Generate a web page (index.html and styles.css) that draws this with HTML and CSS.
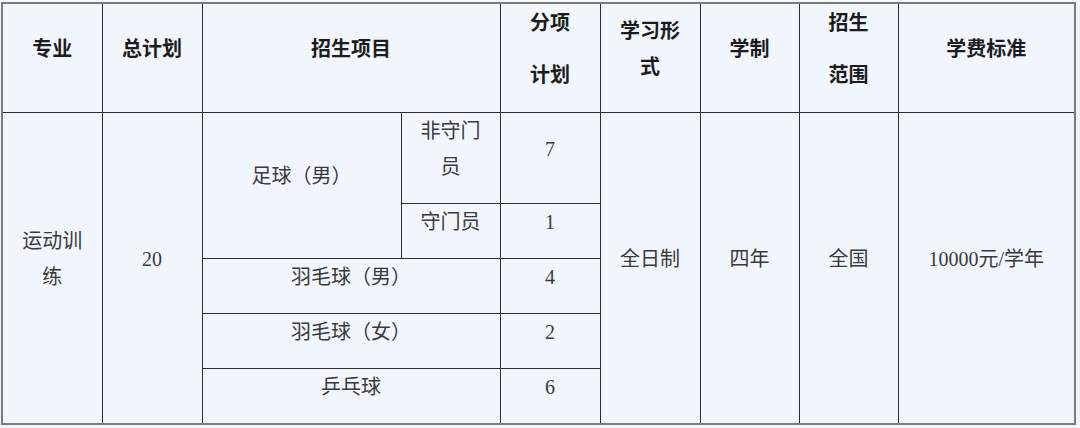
FILE: index.html
```html
<!DOCTYPE html>
<html lang="zh-CN">
<head>
<meta charset="utf-8">
<title>招生计划</title>
<link rel="stylesheet" href="styles.css">
</head>
<body>
<table class="plan">
  <colgroup>
    <col class="c1"><col class="c2"><col class="c3"><col class="c4"><col class="c5"><col class="c6"><col class="c7"><col class="c8"><col class="c9">
  </colgroup>
  <thead>
    <tr class="head">
      <th>专业</th>
      <th>总计划</th>
      <th colspan="2">招生项目</th>
      <th><span class="spaced"><span>分项</span><span>计划</span></span></th>
      <th>学习形<br>式</th>
      <th>学制</th>
      <th><span class="spaced"><span>招生</span><span>范围</span></span></th>
      <th>学费标准</th>
    </tr>
  </thead>
  <tbody>
    <tr class="r91">
      <td rowspan="5">运动训<br>练</td>
      <td rowspan="5">20</td>
      <td rowspan="2">足球（男）</td>
      <td>非守门<br>员</td>
      <td>7</td>
      <td rowspan="5">全日制</td>
      <td rowspan="5">四年</td>
      <td rowspan="5">全国</td>
      <td rowspan="5">10000元/学年</td>
    </tr>
    <tr class="r55">
      <td>守门员</td>
      <td>1</td>
    </tr>
    <tr class="r55">
      <td colspan="2">羽毛球（男）</td>
      <td>4</td>
    </tr>
    <tr class="r55">
      <td colspan="2">羽毛球（女）</td>
      <td>2</td>
    </tr>
    <tr class="r55">
      <td colspan="2">乒乓球</td>
      <td>6</td>
    </tr>
  </tbody>
</table>
</body>
</html>
```
FILE: styles.css
```css
html, body {
  margin: 0;
  padding: 0;
  background: #f1f6fd;
}

body {
  padding: 2px 0 0 1px;
  font-family: "Liberation Serif", "Noto Sans CJK SC", serif;
}

.plan {
  border-collapse: collapse;
  table-layout: fixed;
  width: 1073px;
  border: 2px solid #7b7b7b;
  background: #f1f6fd;
}

.c1 { width: 100px; }
.c2 { width: 100px; }
.c3 { width: 199px; }
.c4 { width: 99px; }
.c5 { width: 100px; }
.c6 { width: 100px; }
.c7 { width: 99px; }
.c8 { width: 99px; }
.c9 { width: 177px; }

.plan th,
.plan td {
  border: 1px solid #2e2e2e;
  padding: 0 0 18px 0;
  text-align: center;
  vertical-align: middle;
  font-size: 20px;
  line-height: 36px;
}

.plan th {
  font-weight: 700;
  color: #1c1c1c;
}

.plan td {
  font-weight: 400;
  color: #3a3a3a;
}

.head { height: 109px; }
.r91 { height: 91px; }
.r55 { height: 54px; }

.spaced {
  display: flex;
  flex-direction: column;
  align-items: center;
  gap: 18px;
  line-height: 34px;
}
```
